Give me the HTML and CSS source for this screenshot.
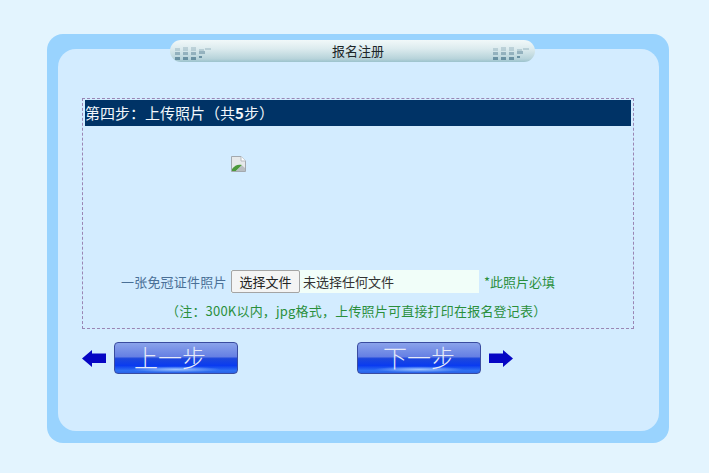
FILE: index.html
```html
<!DOCTYPE html>
<html lang="zh">
<head>
<meta charset="utf-8">
<title>报名注册</title>
<link rel="stylesheet" href="styles.css">
</head>
<body>
<div class="shell">
  <div class="panel">
    <div class="title">
      <svg class="dots" width="44" height="18" viewBox="0 0 44 18"><use href="#dotset"/></svg>
      <span class="title-text">报名注册</span>
      <svg class="dots" width="44" height="18" viewBox="0 0 44 18">
        <defs>
          <g id="dotset">
            <g fill="#8aa9b6" opacity=".55"><rect x="2" y="4" width="5" height="3"/><rect x="10" y="3" width="5" height="4"/><rect x="18" y="3" width="5" height="4"/><rect x="26" y="5" width="5" height="2"/><rect x="32" y="4" width="6" height="2"/></g>
            <g fill="#6f93a4" opacity=".8"><rect x="2" y="8" width="5" height="3"/><rect x="10" y="8" width="5" height="3"/><rect x="18" y="8" width="5" height="3"/><rect x="26" y="7" width="6" height="3"/></g>
            <g fill="#4f7b90"><rect x="2" y="13" width="5" height="3"/><rect x="10" y="13" width="5" height="3"/><rect x="18" y="13" width="5" height="3"/><rect x="26" y="12" width="3" height="2"/></g>
          </g>
        </defs>
        <use href="#dotset"/>
      </svg>
    </div>

    <div class="stepbox">
      <div class="step-head">第四步：上传照片（共<b>5</b>步）</div>
      <div class="photo-slot">
        <svg width="16" height="16" viewBox="0 0 16 16">
          <path d="M1.500 .5H11L15.500 5V15.500H1.500Z" fill="#e6e9ea" stroke="#a3a9ae"/>
          <path d="M11 .5V5H15.500" fill="#fff" stroke="#b4b9bd"/>
          <path d="M2 15V13C5 9 8 8 12 9L6 15Z" fill="#4d9a3c"/>
          <path d="M6 15L12 9.500L15 12V15Z" fill="#b9bec2"/>
        </svg>
      </div>
      <div class="upload-row">
        <span class="field-label">一张免冠证件照片</span>
        <span class="file-input">
          <span class="file-btn">选择文件</span>
          <span class="file-name">未选择任何文件</span>
        </span>
        <span class="hint">*此照片必填</span>
      </div>
      <div class="note">（注：300K以内，jpg格式，上传照片可直接打印在报名登记表）</div>
    </div>

    <div class="nav">
      <div class="nav-group">
        <svg class="arrow" width="24" height="17" viewBox="0 0 24 17"><path d="M0 8.500L10 0V3.500H24V13H10V17Z" fill="#0606c4"/></svg>
        <span class="step-btn step-btn-prev">上一步</span>
      </div>
      <div class="nav-group">
        <span class="step-btn">下一步</span>
        <svg class="arrow" width="24" height="17" viewBox="0 0 24 17"><path d="M24 8.500L14 0V3.500H0V13H14V17Z" fill="#0606c4"/></svg>
      </div>
    </div>
  </div>
</div>
</body>
</html>
```
FILE: styles.css
```css
html, body {
  margin: 0;
  padding: 0;
}
body {
  background: #e3f4fe;
  height: 473px;
  overflow: hidden;
  font-family: "Noto Sans CJK SC", "Noto Sans", sans-serif;
}
.shell {
  box-sizing: border-box;
  width: 622px;
  height: 409px;
  margin: 34px 0 0 47px;
  padding: 15px 10px 12px 11px;
  background: #99d3fe;
  border-radius: 16px;
}
.panel {
  height: 382px;
  background: #d3ecff;
  border-radius: 18px;
  display: flow-root;
}
.title {
  box-sizing: border-box;
  width: 365px;
  height: 22px;
  margin: -9px 0 0 112px;
  padding: 0 0 0 3px;
  display: flex;
  align-items: center;
  justify-content: space-between;
  border-radius: 11px;
  background: linear-gradient(#f1f8f9 0%, #dcebee 40%, #b7d3da 85%, #9cc3cd 100%);
}
.dots {
  filter: blur(.6px);
  opacity: .75;
  display: block;
  margin-top: 3px;
}
.title-text {
  font-size: 13px;
  line-height: 22px;
  margin-left: 8px;
  color: #1c2528;
}
.stepbox {
  box-sizing: border-box;
  width: 552px;
  height: 231px;
  margin: 36px 0 0 24px;
  padding: 1px 2px 0 2px;
  border: 1px dashed #9a86b4;
}
.step-head {
  height: 26px;
  line-height: 26px;
  background: #003366;
  color: #f2f7fb;
  font-size: 15px;
}
.photo-slot {
  height: 144px;
  padding: 30px 0 0 145px;
  box-sizing: border-box;
}
.photo-slot svg {
  display: block;
}
.upload-row {
  display: flex;
  align-items: center;
  height: 23px;
  padding-left: 36px;
  font-size: 13px;
}
.field-label {
  color: #4a7097;
  width: 105px;
  letter-spacing: .2px;
  white-space: nowrap;
}
.file-input {
  display: flex;
  width: 248px;
  height: 23px;
  margin-left: 5px;
  background: #f1fef9;
  color: #333;
}
.file-btn {
  box-sizing: border-box;
  width: 69px;
  height: 23px;
  line-height: 21px;
  text-align: center;
  background: #f4f4f4;
  border: 1px solid #a4a4a4;
  border-radius: 2px;
  color: #222;
}
.file-name {
  margin-left: 3px;
  line-height: 23px;
}
.hint {
  margin-left: 5px;
  color: #2a8f3c;
  white-space: nowrap;
}
.note {
  margin: 8px 0 0 81px;
  height: 19px;
  line-height: 19px;
  font-size: 13px;
  letter-spacing: .2px;
  color: #2a8f3c;
  white-space: nowrap;
}
.nav {
  display: flex;
  margin: 13px 0 0 24px;
  gap: 119px;
}
.nav-group {
  display: flex;
  align-items: center;
  gap: 8px;
}
.step-btn {
  box-sizing: border-box;
  width: 124px;
  height: 32px;
  line-height: 27px;
  text-align: center;
  font-size: 24px;
  font-weight: 300;
  color: #e6eaf8;
  border: 1px solid #3a4ca0;
  border-radius: 4px;
  background:
    radial-gradient(ellipse 45px 3px at 50% 88%, #9cc4ff 0%, rgba(156, 196, 255, 0) 100%),
    linear-gradient(#8aa3ea 0%, #6680e4 45%, #1e48dc 52%, #0a3bf0 75%, #2f70f2 92%, #2a63e8 100%);
  white-space: nowrap;
}
.step-btn-prev {
  padding-right: 12px;
}
```
